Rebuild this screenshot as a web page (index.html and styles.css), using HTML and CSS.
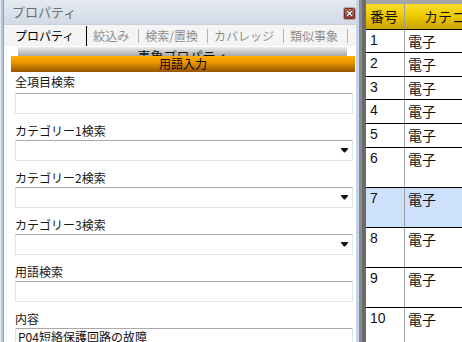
FILE: index.html
```html
<!DOCTYPE html>
<html lang="ja">
<head>
<meta charset="utf-8">
<title>プロパティ</title>
<link rel="stylesheet" href="styles.css">
</head>
<body>
<div class="app">
  <div class="edge-left"></div>
  <div class="panel">
    <div class="titlebar">
      <span class="title">プロパティ</span>
      <svg class="close" width="13" height="13" viewBox="0 0 13 13">
        <defs>
          <linearGradient id="cg" x1="0" y1="0" x2="0" y2="1">
            <stop offset="0" stop-color="#d4897f"/>
            <stop offset="1" stop-color="#9a3a32"/>
          </linearGradient>
        </defs>
        <rect x="0.5" y="0.5" width="12" height="12" rx="2" fill="url(#cg)" stroke="#b9a6a6"/>
        <rect x="1.5" y="1.5" width="10" height="10" rx="1" fill="none" stroke="#7c2b25"/>
        <path d="M4.2 4.2 L8.8 8.8 M8.8 4.2 L4.2 8.8" stroke="#3a1410" stroke-width="2.6" stroke-linecap="square"/>
        <path d="M4.2 4.2 L8.8 8.8 M8.8 4.2 L4.2 8.8" stroke="#ffffff" stroke-width="1.4" stroke-linecap="square"/>
      </svg>
    </div>
    <div class="tabs">
      <span class="tab active">プロパティ</span><span class="sep on"></span>
      <span class="tab">絞込み</span><span class="sep"></span>
      <span class="tab">検索/置換</span><span class="sep"></span>
      <span class="tab">カバレッジ</span><span class="sep"></span>
      <span class="tab">類似事象</span><span class="sep"></span>
    </div>
    <div class="content">
      <div class="sectionbar">事象プロパティ</div>
      <div class="orange">用語入力</div>
      <div class="form">
        <div class="field">
          <div class="label">全項目検索</div>
          <div class="input"></div>
        </div>
        <div class="field">
          <div class="label">カテゴリー1検索</div>
          <div class="input select"><svg width="7" height="5" viewBox="0 0 7 5"><path d="M0 0 H7 V1 L4 4.5 H3 L0 1 Z" fill="#111"/></svg></div>
        </div>
        <div class="field">
          <div class="label">カテゴリー2検索</div>
          <div class="input select"><svg width="7" height="5" viewBox="0 0 7 5"><path d="M0 0 H7 V1 L4 4.5 H3 L0 1 Z" fill="#111"/></svg></div>
        </div>
        <div class="field">
          <div class="label">カテゴリー3検索</div>
          <div class="input select"><svg width="7" height="5" viewBox="0 0 7 5"><path d="M0 0 H7 V1 L4 4.5 H3 L0 1 Z" fill="#111"/></svg></div>
        </div>
        <div class="field">
          <div class="label">用語検索</div>
          <div class="input"></div>
        </div>
        <div class="field">
          <div class="label">内容</div>
          <div class="textarea">P04短絡保護回路の故障</div>
        </div>
      </div>
    </div>
  </div>
  <div class="edge-right"></div>
  <div class="splitter"></div>
  <div class="grid">
    <div class="ghead"><div class="c1">番号</div><div class="c2">カテゴリー</div></div>
    <div class="row h23"><div class="c1">1</div><div class="c2">電子</div></div>
    <div class="row"><div class="c1">2</div><div class="c2">電子</div></div>
    <div class="row h23"><div class="c1">3</div><div class="c2">電子</div></div>
    <div class="row"><div class="c1">4</div><div class="c2">電子</div></div>
    <div class="row"><div class="c1">5</div><div class="c2">電子</div></div>
    <div class="row h40"><div class="c1">6</div><div class="c2">電子</div></div>
    <div class="row h40 selected"><div class="c1">7</div><div class="c2">電子</div></div>
    <div class="row h40"><div class="c1">8</div><div class="c2">電子</div></div>
    <div class="row h40"><div class="c1">9</div><div class="c2">電子</div></div>
    <div class="row last"><div class="c1">10</div><div class="c2">電子</div></div>
  </div>
</div>
</body>
</html>
```
FILE: styles.css
```css
html, body {
  margin: 0;
  padding: 0;
}
body {
  width: 462px;
  height: 342px;
  overflow: hidden;
  background: #fff;
  font-family: "Noto Sans CJK JP", "Noto Sans", sans-serif;
  color: #111;
}
.app {
  display: flex;
  height: 342px;
  overflow: hidden;
}
.edge-left {
  width: 4px;
  flex: none;
  background: linear-gradient(to right, #e3e7ee 0 1px, #b8c7e1 1px 3px, #8e9cb3 3px 4px);
}
.panel {
  width: 352px;
  flex: none;
  display: flex;
  flex-direction: column;
  background: #fff;
  overflow: hidden;
}
.titlebar {
  height: 24px;
  flex: none;
  display: flex;
  align-items: center;
  justify-content: space-between;
  padding-left: 8px;
  box-sizing: border-box;
  background: linear-gradient(#e5eaf2, #d2dae6);
}
.title {
  font-size: 13px;
  line-height: 16px;
  color: #6d6d6d;
}
.close {
  display: block;
  margin-top: 3px;
}
.tabs {
  height: 22px;
  flex: none;
  box-sizing: border-box;
  display: flex;
  align-items: center;
  padding-left: 11px;
  border-top: 1px solid #c8d0dc;
  background: #f4f4f4;
}
.tab {
  font-size: 12px;
  line-height: 16px;
  color: #8e8e8e;
  padding: 0 9px 0 6px;
  white-space: nowrap;
}
.tab.active {
  color: #000;
  padding: 0 12px 0 0;
}
.sep {
  width: 1px;
  height: 14px;
  background: #b3b3b3;
  flex: none;
}
.sep.on {
  height: 20px;
  background: #000;
  align-self: flex-end;
}
.content {
  flex: 1;
  display: flex;
  flex-direction: column;
}
.sectionbar {
  height: 9px;
  flex: none;
  margin: 1px 9px 0 14px;
  padding-top: 2px;
  box-sizing: border-box;
  overflow: hidden;
  background: linear-gradient(#ededed, #a7a7a7);
  text-align: center;
  font-size: 13px;
  line-height: 13px;
  color: #111;
}
.orange {
  height: 16px;
  flex: none;
  margin: 0 1px 0 7px;
  background: linear-gradient(#ffae00 0%, #ee9500 40%, #b86f00 75%, #965600 100%);
  text-align: center;
  font-size: 12px;
  line-height: 16px;
  color: #000;
}
.form {
  display: flex;
  flex-direction: column;
  padding: 0 3px 0 11px;
}
.label {
  height: 26px;
  box-sizing: border-box;
  display: flex;
  align-items: flex-end;
  padding-bottom: 2px;
  font-size: 12px;
  line-height: 14px;
  color: #151515;
}
.field:first-child .label {
  height: 21px;
  padding-bottom: 4px;
}
.input {
  height: 21px;
  box-sizing: border-box;
  border: 1px solid #e1e5eb;
  border-top-color: #a9a9a9;
  background: #fff;
  display: flex;
  align-items: center;
  justify-content: flex-end;
  padding-right: 4px;
}
.input svg {
  display: block;
}
.textarea {
  height: 14px;
  box-sizing: content-box;
  border: 1px solid #e1e5eb;
  border-top-color: #a9a9a9;
  border-bottom: none;
  padding: 1px 0 0 2px;
  font-size: 12px;
  line-height: 13px;
  color: #111;
}
.edge-right {
  width: 3px;
  flex: none;
  background: #c6d4eb;
}
.splitter {
  width: 7px;
  flex: none;
  background: linear-gradient(to right, #8b8b8b 0 3px, #6b6b6b 3px 7px);
}
.grid {
  flex: 1;
  min-width: 0;
  display: flex;
  flex-direction: column;
  border-top: 4px solid #a4a4a4;
  overflow: hidden;
  background: #fff;
}
.ghead {
  height: 26px;
  flex: none;
  box-sizing: border-box;
  display: grid;
  grid-template-columns: 39px 1fr;
  border-bottom: 1px solid #000;
  background: linear-gradient(#f7dc2a 0%, #efcb00 45%, #c9a300 100%);
  font-size: 14px;
  line-height: 18px;
  white-space: nowrap;
}
.ghead .c1 {
  border-right: 1px solid #9f9f9f;
  padding: 3px 0 0 4px;
}
.ghead .c2 {
  padding: 3px 0 0 19px;
  overflow: hidden;
}
.row {
  height: 24px;
  flex: none;
  box-sizing: border-box;
  display: grid;
  grid-template-columns: 39px 1fr;
  border-bottom: 1px solid #000;
  white-space: nowrap;
}
.row.h23 {
  height: 23px;
}
.row.h40 {
  height: 40px;
}
.row.last {
  flex: 1;
  border-bottom: none;
}
.row.selected {
  background: #cde0fc;
}
.row .c1 {
  border-right: 1px solid #a0a0a0;
  padding: 2px 0 0 4px;
  font-family: "Liberation Sans", sans-serif;
  font-size: 14px;
  line-height: 16px;
}
.row .c2 {
  padding: 3px 0 0 3px;
  font-size: 14px;
  line-height: 16px;
}
```
